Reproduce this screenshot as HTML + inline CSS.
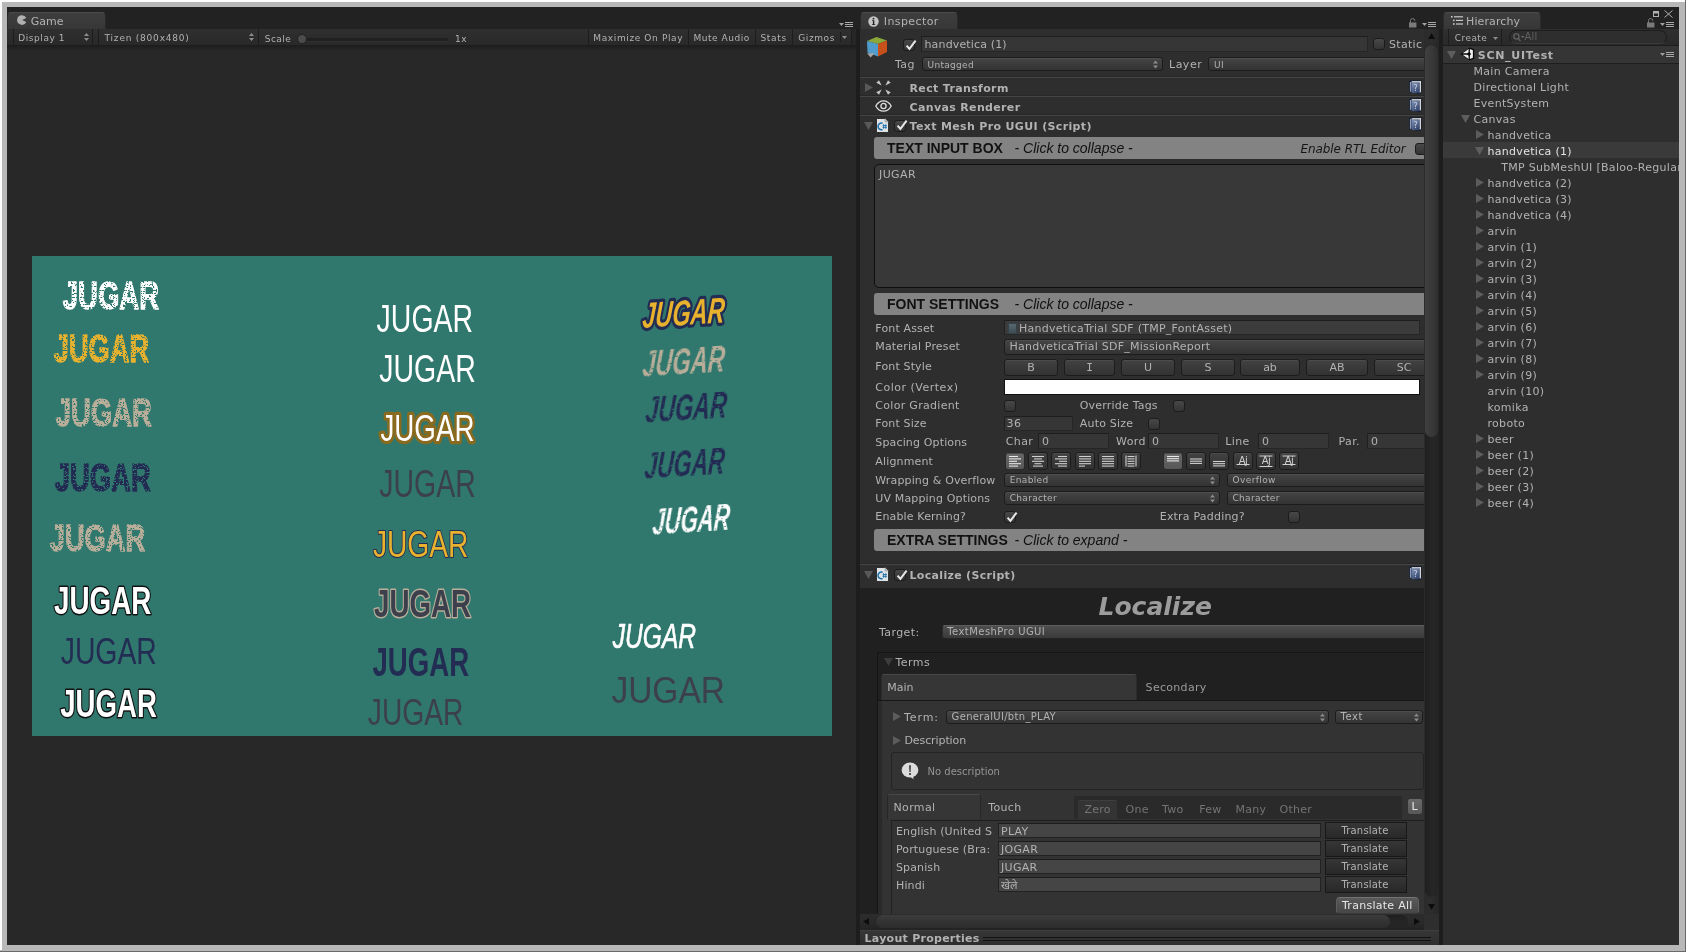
<!DOCTYPE html>
<html lang="en"><head><meta charset="utf-8"><title>Unity Editor</title>
<style>
*{box-sizing:border-box;margin:0;padding:0}
html,body{width:1686px;height:952px;overflow:hidden}
body{background:#b8b8b8;font-family:"DejaVu Sans","Liberation Sans",sans-serif;font-size:11px;color:#b2b2b2;position:relative;line-height:1}
.abs,.abs *{position:absolute}
#frame-w-t{left:0;top:0;width:1686px;height:2px;background:#fdfdfd}
#frame-w-l{left:0;top:0;width:2px;height:950px;background:#fdfdfd}
#frame-d-r{left:1685px;top:0;width:1px;height:952px;background:#6a6a6a}
#frame-d-b{left:0;top:951px;width:1686px;height:1px;background:#6a6a6a}
#main{left:7px;top:7px;width:1672px;height:938px;background:#222;overflow:hidden;will-change:transform}
.t{white-space:pre;line-height:13px;height:13px}
.b{font-weight:bold}
.tab{background:linear-gradient(#3e3e3e,#373737);border-top:1px solid #4a4a4a;border-left:1px solid #2a2a2a;border-right:1px solid #2a2a2a;border-radius:4px 4px 0 0}
.tbar{background:linear-gradient(#2f2f2f,#292929);}
.div{width:1px;background:#1d1d1d}
.popup{background:linear-gradient(#454545,#333);border:1px solid #1c1c1c;border-radius:3px;box-shadow:inset 0 1px 0 #4e4e4e}
.field{background:#363636;border:1px solid #262626;border-top-color:#1e1e1e;border-left-color:#202020}
.cb{background:linear-gradient(#484848,#343434);border:1px solid #1c1c1c;border-radius:3px}
.btn{background:linear-gradient(#424242,#323232);border:1px solid #1c1c1c;border-radius:3px;box-shadow:inset 0 1px 0 #4c4c4c}
.btn.on{background:linear-gradient(#686868,#585858);border-color:#2a2a2a}
.sep{height:2px;border-top:1px solid #242424;background:#444}
</style></head>
<body class="abs">
<div id="frame-w-t"></div><div id="frame-w-l"></div><div id="frame-d-r"></div><div id="frame-d-b"></div>
<div id="main">
<!-- Game panel -->
<div class="" style="left:0px;top:38px;width:849px;height:900px;background:#282828"></div>
<div class="" style="left:0px;top:38px;width:849px;height:6px;background:linear-gradient(#1c1c1c,#282828)"></div>
<div class="tab" style="left:0px;top:5px;width:98.5px;height:17px;"></div>
<svg style="left:10px;top:8px" width="10" height="10" viewBox="0 0 10 10"><path d="M5 0.2A4.8 4.8 0 1 0 9.3 7L5.2 5L9.3 3A4.8 4.8 0 0 0 5 0.2Z" fill="#b0b0b0"/></svg>
<span class="t" style="left:23.7px;top:8px;letter-spacing:0.05px;">Game</span>
<svg style="left:832px;top:15px" width="15" height="6" viewBox="0 0 15 6"><path d="M0 1h5L2.5 4Z" fill="#a0a0a0"/><path d="M6 0.5h8M6 2.5h8M6 4.5h8" stroke="#a8a8a8" stroke-width="1"/></svg>
<div class="tbar" style="left:0px;top:22px;width:849px;height:16px;"></div>
<div class="" style="left:844px;top:22px;width:5px;height:16px;background:#262626"></div>
<div class="div" style="left:6px;top:22px;width:1px;height:16px;"></div>
<div class="div" style="left:85px;top:22px;width:1px;height:16px;"></div>
<div class="div" style="left:91px;top:22px;width:1px;height:16px;"></div>
<div class="div" style="left:251px;top:22px;width:1px;height:16px;"></div>
<div class="div" style="left:581px;top:22px;width:1px;height:16px;"></div>
<div class="div" style="left:681px;top:22px;width:1px;height:16px;"></div>
<div class="div" style="left:748px;top:22px;width:1px;height:16px;"></div>
<div class="div" style="left:785px;top:22px;width:1px;height:16px;"></div>
<div class="div" style="left:844px;top:22px;width:1px;height:16px;"></div>
<span class="t" style="left:11.3px;top:25px;letter-spacing:0.55px;font-size:9px;">Display 1</span>
<svg style="left:77px;top:26px" width="5" height="8" viewBox="0 0 5 8"><path d="M0 3L2.5 0L5 3ZM0 5L2.5 8L5 5Z" fill="#8c8c8c"/></svg>
<span class="t" style="left:97.6px;top:25px;letter-spacing:0.78px;font-size:9px;">Tizen (800x480)</span>
<svg style="left:242px;top:26px" width="5" height="8" viewBox="0 0 5 8"><path d="M0 3L2.5 0L5 3ZM0 5L2.5 8L5 5Z" fill="#8c8c8c"/></svg>
<span class="t" style="left:257.8px;top:26px;letter-spacing:0.45px;font-size:9px;">Scale</span>
<div class="" style="left:293px;top:30.5px;width:148px;height:4.5px;background:#202020;border-radius:2.5px;border-bottom:1px solid #303030"></div>
<div class="" style="left:290px;top:27px;width:10px;height:10px;background:#4c4c4c;border-radius:5px;border:1px solid #222"></div>
<span class="t" style="left:448px;top:26px;letter-spacing:0.5px;font-size:9px;">1x</span>
<span class="t" style="left:586.3px;top:25px;letter-spacing:0.62px;font-size:9px;">Maximize On Play</span>
<span class="t" style="left:686.5px;top:25px;letter-spacing:0.52px;font-size:9px;">Mute Audio</span>
<span class="t" style="left:753.4px;top:25px;letter-spacing:0.7px;font-size:9px;">Stats</span>
<span class="t" style="left:791.3px;top:25px;letter-spacing:0.58px;font-size:9px;">Gizmos</span>
<div class="" style="left:833px;top:25px;width:1px;height:10px;background:#1d1d1d"></div>
<svg style="left:835px;top:29px" width="5" height="3" viewBox="0 0 5 3"><path d="M0 0h5L2.5 3Z" fill="#8c8c8c"/></svg>
<div class="" style="left:25px;top:249px;width:800px;height:480px;background:#30786d;overflow:hidden"><svg width="800" height="480" viewBox="0 0 800 480" style="left:0;top:0" font-family="Liberation Sans, sans-serif">
<defs><filter id="gr" x="-5%" y="-5%" width="110%" height="110%"><feTurbulence type="fractalNoise" baseFrequency="0.35 0.7" numOctaves="3" seed="7" result="n"/><feColorMatrix in="n" type="matrix" values="0 0 0 0 0  0 0 0 0 0  0 0 0 0 0  0 0 0 14 -8.3" result="m"/><feComposite in="SourceGraphic" in2="m" operator="out"/></filter><filter id="gr2" x="-5%" y="-5%" width="110%" height="110%"><feTurbulence type="fractalNoise" baseFrequency="0.2 0.8" numOctaves="2" seed="11" result="n"/><feColorMatrix in="n" type="matrix" values="0 0 0 0 0  0 0 0 0 0  0 0 0 0 0  0 0 0 14 -9.2" result="m"/><feComposite in="SourceGraphic" in2="m" operator="out"/></filter></defs>
<text transform="translate(30.8,52.8) scale(0.705,1)" font-size="39.0" fill="#ffffff" font-weight="bold" filter="url(#gr)" stroke="#ffffff" stroke-width="1.3" stroke-linejoin="round">JUGAR</text>
<text transform="translate(21.8,105.5) scale(0.715,1)" font-size="38.1" fill="#e9b22e" font-weight="bold" filter="url(#gr)" stroke="#e9b22e" stroke-width="1.3" stroke-linejoin="round">JUGAR</text>
<text transform="translate(23.7,169.7) scale(0.705,1)" font-size="39.0" fill="#b9ae9a" font-weight="bold" filter="url(#gr)" stroke="#b9ae9a" stroke-width="1.3" stroke-linejoin="round">JUGAR</text>
<text transform="translate(22.7,234.7) scale(0.720,1)" font-size="38.1" fill="#232c52" font-weight="bold" filter="url(#gr)" stroke="#232c52" stroke-width="1.3" stroke-linejoin="round">JUGAR</text>
<text transform="translate(17.7,295.4) scale(0.724,1)" font-size="37.7" fill="#b9ae9a" font-weight="bold" filter="url(#gr)" stroke="#b9ae9a" stroke-width="1.3" stroke-linejoin="round">JUGAR</text>
<text transform="translate(22.0,358.2) scale(0.715,1)" font-size="38.9" fill="#ffffff" font-weight="bold" stroke="#111" stroke-width="3" stroke-linejoin="round" paint-order="stroke">JUGAR</text>
<text transform="translate(28.7,408.0) scale(0.773,1)" font-size="36.7" fill="#232c52" font-weight="normal">JUGAR</text>
<text transform="translate(28.2,461.4) scale(0.710,1)" font-size="38.9" fill="#ffffff" font-weight="bold" stroke="#111" stroke-width="3" stroke-linejoin="round" paint-order="stroke">JUGAR</text>
<text transform="translate(344.6,76.3) scale(0.744,1)" font-size="38.3" fill="#ffffff" font-weight="normal">JUGAR</text>
<text transform="translate(347.3,126.0) scale(0.752,1)" font-size="37.9" fill="#ffffff" font-weight="normal">JUGAR</text>
<text transform="translate(348.4,184.5) scale(0.763,1)" font-size="36.4" fill="#ffffff" font-weight="normal" stroke="#8a6a1e" stroke-width="6.5" stroke-linejoin="round" paint-order="stroke">JUGAR</text>
<text transform="translate(347.3,241.2) scale(0.752,1)" font-size="37.9" fill="#3c404c" font-weight="normal">JUGAR</text>
<text transform="translate(340.9,301.3) scale(0.762,1)" font-size="37.0" fill="#e9b22e" font-weight="normal" stroke="#232c52" stroke-width="2" stroke-linejoin="round" paint-order="stroke">JUGAR</text>
<text transform="translate(342.0,361.4) scale(0.704,1)" font-size="39.4" fill="#3c404c" font-weight="bold" stroke="#b9ae9a" stroke-width="3" stroke-linejoin="round" paint-order="stroke">JUGAR</text>
<text transform="translate(340.5,419.7) scale(0.693,1)" font-size="39.9" fill="#232c52" font-weight="bold">JUGAR</text>
<text transform="translate(335.8,468.8) scale(0.763,1)" font-size="37.0" fill="#3c404c" font-weight="normal">JUGAR</text>
<text transform="translate(609.8,72.0) rotate(-4) skewX(-8) scale(0.660,1)" font-size="35.7" fill="#e9b22e" font-weight="bold" font-style="italic" stroke="#232c52" stroke-width="6.5" stroke-linejoin="round" paint-order="stroke">JUGAR</text>
<text transform="translate(609.8,121.0) rotate(-4) skewX(-8) scale(0.660,1)" font-size="35.7" fill="#b9ae9a" font-weight="bold" font-style="italic" filter="url(#gr2)">JUGAR</text>
<text transform="translate(612.8,167.0) rotate(-4) skewX(-8) scale(0.652,1)" font-size="35.7" fill="#232c52" font-weight="bold" font-style="italic" filter="url(#gr2)">JUGAR</text>
<text transform="translate(611.8,223.0) rotate(-4) skewX(-8) scale(0.644,1)" font-size="35.7" fill="#232c52" font-weight="bold" font-style="italic" filter="url(#gr2)">JUGAR</text>
<text transform="translate(619.8,279.0) rotate(-4) skewX(-8) scale(0.620,1)" font-size="35.7" fill="#ffffff" font-weight="bold" font-style="italic" filter="url(#gr2)">JUGAR</text>
<text transform="translate(580.8,392.4) scale(0.685,1)" font-size="35.9" fill="#ffffff" font-weight="normal" font-style="italic" stroke="#ffffff" stroke-width="0.7" stroke-linejoin="round">JUGAR</text>
<text transform="translate(579.4,446.5) scale(0.921,1)" font-size="36.4" fill="#3c404c" font-weight="normal">JUGAR</text>
</svg></div>
<!-- Inspector panel -->
<div style="left:849px;top:22px;width:4px;height:916px;background:#1d1d1d"></div>
<div style="left:853px;top:22px;width:580px;height:916px;background:#2e2e2e"></div>
<div class="tab" style="left:853px;top:5px;width:98px;height:17px;"></div>
<svg style="left:861px;top:8.5px" width="11" height="11" viewBox="0 0 11 11"><circle cx="5.5" cy="5.5" r="5.2" fill="#c4c4c4"/><path d="M4 4.2H6.3V8.2H7.3V9H3.9V8.2H4.9V5H4Z" fill="#222"/><circle cx="5.5" cy="2.7" r="0.9" fill="#222"/></svg>
<span class="t" style="left:876.8px;top:8px;font-size:11px;letter-spacing:0.4px;">Inspector</span>
<svg style="left:1402px;top:11px" width="8" height="10" viewBox="0 0 8 10"><path d="M1.5 5V2.6A2.1 2.1 0 0 1 5.7 2.6V3.2" fill="none" stroke="#7a7a7a" stroke-width="1"/><rect x="0" y="4.5" width="7.4" height="5" fill="#7a7a7a"/></svg>
<svg style="left:1415px;top:15px" width="15" height="6" viewBox="0 0 15 6"><path d="M0 1h5L2.5 4Z" fill="#a0a0a0"/><path d="M6 0.5h8M6 2.5h8M6 4.5h8" stroke="#a8a8a8" stroke-width="1"/></svg>
<svg style="left:859px;top:29px" width="22" height="22" viewBox="0 0 22 22"><path d="M1 5L10.5 1L21 4.5L12 8Z" fill="#8aa83a"/><path d="M1 5L12 8V20.5L1.5 16.5Z" fill="#4f9ccc"/><path d="M12 8L21 4.5V16L12 20.5Z" fill="#c8501a"/><path d="M1 17.2H8.5L4.7 21.5Z" fill="#a6a6a6"/></svg>
<div class="cb" style="left:896px;top:32px;width:12px;height:12px;"></div>
<svg style="left:896.5px;top:31.5px" width="13" height="13" viewBox="0 0 13 13"><path d="M2.6 6.6L5.4 9.8L11.6 1.6" fill="none" stroke="#e8e8e8" stroke-width="2" /></svg>
<div class="field" style="left:914px;top:29px;width:447px;height:16px;"></div>
<span class="t" style="left:917.5px;top:31px;font-size:11px;letter-spacing:0.15px;">handvetica (1)</span>
<div class="cb" style="left:1366px;top:31px;width:12px;height:12px;"></div>
<span class="t" style="left:1382px;top:31px;font-size:11px;letter-spacing:0.3px;">Static</span>
<span class="t" style="left:888px;top:51px;font-size:11px;letter-spacing:0.4px;">Tag</span>
<div class="popup" style="left:915px;top:50px;width:241px;height:14px;"></div>
<span class="t" style="left:920.5px;top:52px;font-size:9px;letter-spacing:0.3px;">Untagged</span>
<svg style="left:1146px;top:53px" width="5" height="9" viewBox="0 0 5 9"><path d="M0 3.5L2.5 0.5L5 3.5ZM0 5.5L2.5 8.5L5 5.5Z" fill="#8c8c8c"/></svg>
<span class="t" style="left:1162px;top:51px;font-size:11px;letter-spacing:0.5px;">Layer</span>
<div class="popup" style="left:1201px;top:50px;width:230px;height:14px;"></div>
<span class="t" style="left:1207px;top:52px;font-size:9px;letter-spacing:0.5px;">UI</span>
<div style="left:853px;top:69px;width:564px;height:1px;background:#282828"></div>
<div style="left:853px;top:70px;width:564px;height:1px;background:#454545"></div>
<svg style="left:858px;top:76px" width="8" height="9" viewBox="0 0 8 9"><path d="M0 0L8 4.5L0 9Z" fill="#585858"/></svg>
<svg style="left:869px;top:73px" width="15" height="15" viewBox="0 0 15 15"><g fill="#c6c6c6"><path d="M0.3 2.8L3 0.3L5.6 5.6Z"/><path d="M14.7 2.8L12 0.3L9.4 5.6Z"/><path d="M0.3 12.2L3 14.7L5.6 9.4Z"/><path d="M14.7 12.2L12 14.7L9.4 9.4Z"/></g></svg>
<span class="t b" style="left:902.5px;top:75px;font-size:11px;letter-spacing:0.35px;">Rect Transform</span>
<svg style="left:1402px;top:73px" width="13" height="14" viewBox="0 0 13 14"><defs><linearGradient id="hg1" x1="0" y1="0" x2="0.6" y2="1"><stop offset="0" stop-color="#8798bc"/><stop offset="1" stop-color="#34476e"/></linearGradient></defs><path d="M1.2 0.6L12.4 0.3V12.8L10.6 14L0.3 12V1.6Z" fill="#0e1830"/><rect x="0.9" y="1.9" width="1.5" height="9.9" fill="#8d9dbd"/><rect x="2.7" y="2.4" width="8" height="10.7" fill="url(#hg1)"/><rect x="10.7" y="1.4" width="1.3" height="11" fill="#d4d4d4"/><rect x="2.7" y="1.2" width="9.3" height="1.2" fill="#ececec"/><text x="4.4" y="11" font-size="8" fill="#cfd6e4" font-family="DejaVu Sans, sans-serif">?</text></svg>
<div style="left:853px;top:88px;width:564px;height:1px;background:#282828"></div>
<div style="left:853px;top:89px;width:564px;height:1px;background:#454545"></div>
<svg style="left:868px;top:93px" width="17" height="12" viewBox="0 0 17 12"><path d="M0.8 6C3 2 6 0.8 8.5 0.8S14 2 16.2 6C14 10 11 11.2 8.5 11.2S3 10 0.8 6Z" fill="none" stroke="#e0e0e0" stroke-width="1.3"/><circle cx="8.5" cy="6" r="2.6" fill="none" stroke="#e0e0e0" stroke-width="1.3"/></svg>
<span class="t b" style="left:902.5px;top:94px;font-size:11px;letter-spacing:0.35px;">Canvas Renderer</span>
<svg style="left:1402px;top:91px" width="13" height="14" viewBox="0 0 13 14"><defs><linearGradient id="hg2" x1="0" y1="0" x2="0.6" y2="1"><stop offset="0" stop-color="#8798bc"/><stop offset="1" stop-color="#34476e"/></linearGradient></defs><path d="M1.2 0.6L12.4 0.3V12.8L10.6 14L0.3 12V1.6Z" fill="#0e1830"/><rect x="0.9" y="1.9" width="1.5" height="9.9" fill="#8d9dbd"/><rect x="2.7" y="2.4" width="8" height="10.7" fill="url(#hg2)"/><rect x="10.7" y="1.4" width="1.3" height="11" fill="#d4d4d4"/><rect x="2.7" y="1.2" width="9.3" height="1.2" fill="#ececec"/><text x="4.4" y="11" font-size="8" fill="#cfd6e4" font-family="DejaVu Sans, sans-serif">?</text></svg>
<div style="left:853px;top:107px;width:564px;height:1px;background:#282828"></div>
<div style="left:853px;top:108px;width:564px;height:1px;background:#454545"></div>
<svg style="left:857px;top:115px" width="9" height="8" viewBox="0 0 9 8"><path d="M0 0H9L4.5 8Z" fill="#585858"/></svg>
<svg style="left:869px;top:111px" width="13" height="15" viewBox="0 0 13 15"><path d="M0.5 0.5H9L12.5 4V14.5H0.5Z" fill="#dfe3e6" stroke="#1a1a1a" stroke-width="0.8"/><path d="M9 0.5V4H12.5" fill="#b8bec4" stroke="#888" stroke-width="0.5"/><path d="M6.6 5.2A3.4 3.4 0 1 0 6.6 11.6" fill="none" stroke="#1b6fa8" stroke-width="1.5"/><path d="M7.6 6.2V10.8M9.8 6.2V10.8M6.6 7.6H10.8M6.6 9.4H10.8" stroke="#1b6fa8" stroke-width="0.9"/></svg>
<div class="cb" style="left:887px;top:112.5px;width:12px;height:12px;"></div>
<svg style="left:887.5px;top:112px" width="13" height="13" viewBox="0 0 13 13"><path d="M2.6 6.6L5.4 9.8L11.6 1.6" fill="none" stroke="#e8e8e8" stroke-width="2" /></svg>
<span class="t b" style="left:902.5px;top:113px;font-size:11px;letter-spacing:0.35px;">Text Mesh Pro UGUI (Script)</span>
<svg style="left:1402px;top:110px" width="13" height="14" viewBox="0 0 13 14"><defs><linearGradient id="hg3" x1="0" y1="0" x2="0.6" y2="1"><stop offset="0" stop-color="#8798bc"/><stop offset="1" stop-color="#34476e"/></linearGradient></defs><path d="M1.2 0.6L12.4 0.3V12.8L10.6 14L0.3 12V1.6Z" fill="#0e1830"/><rect x="0.9" y="1.9" width="1.5" height="9.9" fill="#8d9dbd"/><rect x="2.7" y="2.4" width="8" height="10.7" fill="url(#hg3)"/><rect x="10.7" y="1.4" width="1.3" height="11" fill="#d4d4d4"/><rect x="2.7" y="1.2" width="9.3" height="1.2" fill="#ececec"/><text x="4.4" y="11" font-size="8" fill="#cfd6e4" font-family="DejaVu Sans, sans-serif">?</text></svg>
<div style="left:867px;top:130px;width:560px;height:22px;background:#838383;border-radius:3px"></div>
<span class="t" style="left:880px;top:132.5px;font:bold 14px/16px 'Liberation Sans',sans-serif;color:#111;height:16px">TEXT INPUT BOX</span>
<span class="t" style="left:1007.5px;top:132.5px;font:italic 14px/16px 'Liberation Sans',sans-serif;color:#111;height:16px">- Click to collapse -</span>
<span class="t" style="left:1293.5px;top:136px;font-size:12px;letter-spacing:-0.08px;color:#161616;font-style:oblique;">Enable RTL Editor</span>
<div class="cb" style="left:1408px;top:136px;width:12px;height:12px;"></div>
<div style="left:866.5px;top:156.5px;width:560px;height:124.5px;background:#383838;border:1.5px solid #0e0e0e;border-radius:5px"></div>
<span class="t" style="left:872px;top:161px;font-size:11px;letter-spacing:0.4px;">JUGAR</span>
<div style="left:867px;top:286px;width:560px;height:22px;background:#838383;border-radius:3px"></div>
<span class="t" style="left:880px;top:288.5px;font:bold 14px/16px 'Liberation Sans',sans-serif;color:#111;height:16px">FONT SETTINGS</span>
<span class="t" style="left:1007.5px;top:288.5px;font:italic 14px/16px 'Liberation Sans',sans-serif;color:#111;height:16px">- Click to collapse -</span>
<span class="t" style="left:868.3px;top:315px;font-size:11px;letter-spacing:0.15px;">Font Asset</span>
<div class="field" style="left:996.5px;top:313px;width:416.5px;height:15px;background:#3c3c3c"></div>
<div style="left:1000.5px;top:316px;width:9.5px;height:10.5px;background:linear-gradient(#586870,#3e4c54);border:1px solid #36424a"></div>
<span class="t" style="left:1012px;top:315px;font-size:11px;letter-spacing:0.25px;">HandveticaTrial SDF (TMP_FontAsset)</span>
<span class="t" style="left:868.3px;top:333px;font-size:11px;letter-spacing:0.15px;">Material Preset</span>
<div class="popup" style="left:997px;top:332px;width:434px;height:16px;"></div>
<span class="t" style="left:1002.5px;top:333px;font-size:11px;letter-spacing:0.24px;">HandveticaTrial SDF_MissionReport</span>
<span class="t" style="left:868.3px;top:353px;font-size:11px;letter-spacing:0.15px;">Font Style</span>
<div class="btn" style="left:997px;top:352px;width:54px;height:17px;"></div>
<span class="t" style="left:997px;top:354px;width:54px;text-align:center;font-size:11px;">B</span>
<div class="btn" style="left:1057px;top:352px;width:51px;height:17px;"></div>
<span class="t" style="left:1057px;top:354px;width:51px;text-align:center;font-size:11px;font-family:'DejaVu Sans Mono',monospace;">I</span>
<div class="btn" style="left:1114px;top:352px;width:54px;height:17px;"></div>
<span class="t" style="left:1114px;top:354px;width:54px;text-align:center;font-size:11px;">U</span>
<div class="btn" style="left:1174px;top:352px;width:54px;height:17px;"></div>
<span class="t" style="left:1174px;top:354px;width:54px;text-align:center;font-size:11px;">S</span>
<div class="btn" style="left:1233px;top:352px;width:60px;height:17px;"></div>
<span class="t" style="left:1233px;top:354px;width:60px;text-align:center;font-size:11px;">ab</span>
<div class="btn" style="left:1299px;top:352px;width:62px;height:17px;"></div>
<span class="t" style="left:1299px;top:354px;width:62px;text-align:center;font-size:11px;">AB</span>
<div class="btn" style="left:1367px;top:352px;width:60px;height:17px;"></div>
<span class="t" style="left:1367px;top:354px;width:60px;text-align:center;font-size:11px;">SC</span>
<span class="t" style="left:868.3px;top:374px;font-size:11px;letter-spacing:0.5px;">Color (Vertex)</span>
<div style="left:996.5px;top:372px;width:416.5px;height:16px;background:#fff;border:1px solid #111"></div>
<span class="t" style="left:868.3px;top:392px;font-size:11px;letter-spacing:0.3px;">Color Gradient</span>
<div class="cb" style="left:997px;top:393px;width:12px;height:12px;"></div>
<span class="t" style="left:1072.75px;top:392px;font-size:11px;letter-spacing:0.2px;">Override Tags</span>
<div class="cb" style="left:1166px;top:393px;width:12px;height:12px;"></div>
<span class="t" style="left:868.3px;top:410px;font-size:11px;letter-spacing:0.15px;">Font Size</span>
<div class="field" style="left:996.5px;top:408.5px;width:69.5px;height:15px;"></div>
<span class="t" style="left:999.6px;top:410px;font-size:11px;letter-spacing:0.3px;">36</span>
<span class="t" style="left:1072.75px;top:410px;font-size:11px;letter-spacing:0.2px;">Auto Size</span>
<div class="cb" style="left:1141px;top:411px;width:12px;height:12px;"></div>
<span class="t" style="left:868.3px;top:429px;font-size:11px;letter-spacing:0.15px;">Spacing Options</span>
<span class="t" style="left:998.75px;top:428px;font-size:11px;letter-spacing:0.4px;">Char</span>
<div class="field" style="left:1031px;top:426px;width:70.5px;height:15.5px;"></div>
<span class="t" style="left:1035px;top:428px;font-size:11px;letter-spacing:0.15px;">0</span>
<span class="t" style="left:1109px;top:428px;font-size:11px;letter-spacing:0.4px;">Word</span>
<div class="field" style="left:1141px;top:426px;width:70.5px;height:15.5px;"></div>
<span class="t" style="left:1145px;top:428px;font-size:11px;letter-spacing:0.15px;">0</span>
<span class="t" style="left:1218.25px;top:428px;font-size:11px;letter-spacing:0.4px;">Line</span>
<div class="field" style="left:1251px;top:426px;width:70.5px;height:15.5px;"></div>
<span class="t" style="left:1255px;top:428px;font-size:11px;letter-spacing:0.15px;">0</span>
<span class="t" style="left:1331.5px;top:428px;font-size:11px;letter-spacing:0.4px;">Par.</span>
<div class="field" style="left:1360px;top:426px;width:70.5px;height:15.5px;"></div>
<span class="t" style="left:1364px;top:428px;font-size:11px;letter-spacing:0.15px;">0</span>
<span class="t" style="left:868.3px;top:448px;font-size:11px;letter-spacing:0.15px;">Alignment</span>
<div class="btn on" style="left:998px;top:445px;width:20px;height:18px;"></div>
<svg style="left:1001px;top:448px" width="14" height="12" viewBox="0 0 14 12"><path d="M1 1.5h9" stroke="#e8e8e8" stroke-width="1.1"/><path d="M1 3.9h12" stroke="#e8e8e8" stroke-width="1.1"/><path d="M1 6.3h8" stroke="#e8e8e8" stroke-width="1.1"/><path d="M1 8.7h12" stroke="#e8e8e8" stroke-width="1.1"/><path d="M1 11.1h9" stroke="#e8e8e8" stroke-width="1.1"/></svg>
<div class="btn" style="left:1021px;top:445px;width:20px;height:18px;"></div>
<svg style="left:1024px;top:448px" width="14" height="12" viewBox="0 0 14 12"><path d="M1.0 1.5h12" stroke="#d0d0d0" stroke-width="1.1"/><path d="M3.0 3.9h8" stroke="#d0d0d0" stroke-width="1.1"/><path d="M1.0 6.3h12" stroke="#d0d0d0" stroke-width="1.1"/><path d="M3.5 8.7h7" stroke="#d0d0d0" stroke-width="1.1"/><path d="M2.0 11.1h10" stroke="#d0d0d0" stroke-width="1.1"/></svg>
<div class="btn" style="left:1044px;top:445px;width:20px;height:18px;"></div>
<svg style="left:1047px;top:448px" width="14" height="12" viewBox="0 0 14 12"><path d="M4 1.5h9" stroke="#d0d0d0" stroke-width="1.1"/><path d="M1 3.9h12" stroke="#d0d0d0" stroke-width="1.1"/><path d="M5 6.3h8" stroke="#d0d0d0" stroke-width="1.1"/><path d="M1 8.7h12" stroke="#d0d0d0" stroke-width="1.1"/><path d="M4 11.1h9" stroke="#d0d0d0" stroke-width="1.1"/></svg>
<div class="btn" style="left:1068px;top:445px;width:20px;height:18px;"></div>
<svg style="left:1071px;top:448px" width="14" height="12" viewBox="0 0 14 12"><path d="M1 1.5h12" stroke="#d0d0d0" stroke-width="1.1"/><path d="M1 3.9h12" stroke="#d0d0d0" stroke-width="1.1"/><path d="M1 6.3h12" stroke="#d0d0d0" stroke-width="1.1"/><path d="M1 8.7h12" stroke="#d0d0d0" stroke-width="1.1"/><path d="M1 11.1h6" stroke="#d0d0d0" stroke-width="1.1"/></svg>
<div class="btn" style="left:1091px;top:445px;width:20px;height:18px;"></div>
<svg style="left:1094px;top:448px" width="14" height="12" viewBox="0 0 14 12"><path d="M1 1.5h12" stroke="#d0d0d0" stroke-width="1.1"/><path d="M1 3.9h12" stroke="#d0d0d0" stroke-width="1.1"/><path d="M1 6.3h12" stroke="#d0d0d0" stroke-width="1.1"/><path d="M1 8.7h12" stroke="#d0d0d0" stroke-width="1.1"/><path d="M1 11.1h12" stroke="#d0d0d0" stroke-width="1.1"/></svg>
<div class="btn" style="left:1114px;top:445px;width:20px;height:18px;"></div>
<svg style="left:1117px;top:448px" width="14" height="12" viewBox="0 0 14 12"><path d="M2 0.5V11.5M12 0.5V11.5" stroke="#d0d0d0" stroke-width="1.1"/><path d="M3.5 1.5h7" stroke="#d0d0d0" stroke-width="1.1"/><path d="M3.5 3.9h7" stroke="#d0d0d0" stroke-width="1.1"/><path d="M3.5 6.3h7" stroke="#d0d0d0" stroke-width="1.1"/><path d="M3.5 8.7h7" stroke="#d0d0d0" stroke-width="1.1"/><path d="M3.5 11.1h7" stroke="#d0d0d0" stroke-width="1.1"/></svg>
<div class="btn on" style="left:1156px;top:445px;width:20px;height:18px;"></div>
<svg style="left:1159px;top:448px" width="14" height="12" viewBox="0 0 14 12"><path d="M1 1.5h12" stroke="#e8e8e8" stroke-width="1.1"/><path d="M1 3.7h12" stroke="#e8e8e8" stroke-width="1.1"/><path d="M1 5.9h12" stroke="#e8e8e8" stroke-width="1.1"/></svg>
<div class="btn" style="left:1179px;top:445px;width:20px;height:18px;"></div>
<svg style="left:1182px;top:448px" width="14" height="12" viewBox="0 0 14 12"><path d="M1 4.0h12" stroke="#d0d0d0" stroke-width="1.1"/><path d="M1 6.2h12" stroke="#d0d0d0" stroke-width="1.1"/><path d="M1 8.4h12" stroke="#d0d0d0" stroke-width="1.1"/></svg>
<div class="btn" style="left:1202px;top:445px;width:20px;height:18px;"></div>
<svg style="left:1205px;top:448px" width="14" height="12" viewBox="0 0 14 12"><path d="M1 6.5h12" stroke="#d0d0d0" stroke-width="1.1"/><path d="M1 8.7h12" stroke="#d0d0d0" stroke-width="1.1"/><path d="M1 10.9h12" stroke="#d0d0d0" stroke-width="1.1"/></svg>
<div class="btn" style="left:1226px;top:445px;width:20px;height:18px;"></div>
<span class="t" style="left:1226px;top:447px;width:20px;text-align:center;font-size:10px;letter-spacing:-0.5px;color:#d0d0d0">Aj</span>
<svg style="left:1229px;top:447px" width="14" height="14" viewBox="0 0 14 14"><path d="M0.5 10.5h13" stroke="#d0d0d0" stroke-width="1"/></svg>
<div class="btn" style="left:1249px;top:445px;width:20px;height:18px;"></div>
<span class="t" style="left:1249px;top:447px;width:20px;text-align:center;font-size:10px;letter-spacing:-0.5px;color:#d0d0d0">Aj</span>
<svg style="left:1252px;top:447px" width="14" height="14" viewBox="0 0 14 14"><path d="M0.5 2h13M0.5 12.5h13" stroke="#d0d0d0" stroke-width="1"/></svg>
<div class="btn" style="left:1272px;top:445px;width:20px;height:18px;"></div>
<span class="t" style="left:1272px;top:447px;width:20px;text-align:center;font-size:10px;letter-spacing:-0.5px;color:#d0d0d0">Aj</span>
<svg style="left:1275px;top:447px" width="14" height="14" viewBox="0 0 14 14"><path d="M0.5 2h13M0.5 10.5h13" stroke="#d0d0d0" stroke-width="1"/></svg>
<span class="t" style="left:868.3px;top:467px;font-size:11px;letter-spacing:0.15px;">Wrapping &amp; Overflow</span>
<div class="popup" style="left:997px;top:466px;width:216px;height:14px;"></div>
<span class="t" style="left:1002.75px;top:467px;font-size:9px;letter-spacing:0.35px;">Enabled</span>
<svg style="left:1203px;top:469px" width="5" height="9" viewBox="0 0 5 9"><path d="M0 3.5L2.5 0.5L5 3.5ZM0 5.5L2.5 8.5L5 5.5Z" fill="#8c8c8c"/></svg>
<div class="popup" style="left:1220px;top:466px;width:211px;height:14px;"></div>
<span class="t" style="left:1225.5px;top:467px;font-size:9px;letter-spacing:0.4px;">Overflow</span>
<span class="t" style="left:868.3px;top:485px;font-size:11px;letter-spacing:0.15px;">UV Mapping Options</span>
<div class="popup" style="left:997px;top:484px;width:216px;height:14px;"></div>
<span class="t" style="left:1002.75px;top:485px;font-size:9px;letter-spacing:0.3px;">Character</span>
<svg style="left:1203px;top:487px" width="5" height="9" viewBox="0 0 5 9"><path d="M0 3.5L2.5 0.5L5 3.5ZM0 5.5L2.5 8.5L5 5.5Z" fill="#8c8c8c"/></svg>
<div class="popup" style="left:1220px;top:484px;width:211px;height:14px;"></div>
<span class="t" style="left:1225.5px;top:485px;font-size:9px;letter-spacing:0.3px;">Character</span>
<span class="t" style="left:868.3px;top:503px;font-size:11px;letter-spacing:0.15px;">Enable Kerning?</span>
<div class="cb" style="left:997px;top:504px;width:12px;height:12px;"></div>
<svg style="left:997.5px;top:503.5px" width="13" height="13" viewBox="0 0 13 13"><path d="M2.6 6.6L5.4 9.8L11.6 1.6" fill="none" stroke="#e8e8e8" stroke-width="2" /></svg>
<span class="t" style="left:1152.75px;top:503px;font-size:11px;letter-spacing:0.2px;">Extra Padding?</span>
<div class="cb" style="left:1281px;top:504px;width:12px;height:12px;"></div>
<div style="left:867px;top:522px;width:560px;height:22px;background:#838383;border-radius:3px"></div>
<span class="t" style="left:880px;top:524.5px;font:bold 14px/16px 'Liberation Sans',sans-serif;color:#111;height:16px">EXTRA SETTINGS</span>
<span class="t" style="left:1007.5px;top:524.5px;font:italic 14px/16px 'Liberation Sans',sans-serif;color:#111;height:16px">- Click to expand -</span>
<div style="left:853px;top:556px;width:564px;height:1px;background:#282828"></div>
<div style="left:853px;top:557px;width:564px;height:1px;background:#454545"></div>
<svg style="left:857px;top:564px" width="9" height="8" viewBox="0 0 9 8"><path d="M0 0H9L4.5 8Z" fill="#585858"/></svg>
<svg style="left:869px;top:560px" width="13" height="15" viewBox="0 0 13 15"><path d="M0.5 0.5H9L12.5 4V14.5H0.5Z" fill="#dfe3e6" stroke="#1a1a1a" stroke-width="0.8"/><path d="M9 0.5V4H12.5" fill="#b8bec4" stroke="#888" stroke-width="0.5"/><path d="M6.6 5.2A3.4 3.4 0 1 0 6.6 11.6" fill="none" stroke="#1b6fa8" stroke-width="1.5"/><path d="M7.6 6.2V10.8M9.8 6.2V10.8M6.6 7.6H10.8M6.6 9.4H10.8" stroke="#1b6fa8" stroke-width="0.9"/></svg>
<div class="cb" style="left:887px;top:562px;width:12px;height:12px;"></div>
<svg style="left:887.5px;top:561.5px" width="13" height="13" viewBox="0 0 13 13"><path d="M2.6 6.6L5.4 9.8L11.6 1.6" fill="none" stroke="#e8e8e8" stroke-width="2" /></svg>
<span class="t b" style="left:902.5px;top:562px;font-size:11px;letter-spacing:0.32px;">Localize (Script)</span>
<svg style="left:1402px;top:559px" width="13" height="14" viewBox="0 0 13 14"><defs><linearGradient id="hg4" x1="0" y1="0" x2="0.6" y2="1"><stop offset="0" stop-color="#8798bc"/><stop offset="1" stop-color="#34476e"/></linearGradient></defs><path d="M1.2 0.6L12.4 0.3V12.8L10.6 14L0.3 12V1.6Z" fill="#0e1830"/><rect x="0.9" y="1.9" width="1.5" height="9.9" fill="#8d9dbd"/><rect x="2.7" y="2.4" width="8" height="10.7" fill="url(#hg4)"/><rect x="10.7" y="1.4" width="1.3" height="11" fill="#d4d4d4"/><rect x="2.7" y="1.2" width="9.3" height="1.2" fill="#ececec"/><text x="4.4" y="11" font-size="8" fill="#cfd6e4" font-family="DejaVu Sans, sans-serif">?</text></svg>
<div style="left:853px;top:580.5px;width:580px;height:327px;background:#202020"></div>
<span class="t b" style="left:1091.5px;top:593px;font-size:25px;letter-spacing:0px;color:#9c9c9c;font-style:oblique;height:30px;line-height:30px;margin-top:-8.5px;">Localize</span>
<span class="t" style="left:872px;top:619px;font-size:11px;letter-spacing:0.4px;">Target:</span>
<div class="popup" style="left:935px;top:618px;width:496px;height:14px;background:linear-gradient(#4e4e4e,#3a3a3a);border-color:#5e5e5e #2a2a2a #242424 #2a2a2a;box-shadow:none"></div>
<span class="t" style="left:940.25px;top:618px;font-size:10px;letter-spacing:0.44px;">TextMeshPro UGUI</span>
<div style="left:870px;top:645px;width:561px;height:262px;background:#202020;border-top:1px solid #151515;border-left:1px solid #151515"></div>
<svg style="left:876.5px;top:651px" width="9" height="8" viewBox="0 0 9 8"><path d="M0 0H9L4.5 8Z" fill="#3c3c3c"/></svg>
<span class="t" style="left:888.4px;top:649px;font-size:11px;letter-spacing:0.5px;">Terms</span>
<div style="left:874px;top:667px;width:256px;height:26px;background:#363636;border-top:1px solid #484848;border-left:1px solid #2c2c2c;border-right:1px solid #2c2c2c;border-radius:3px 3px 0 0"></div>
<span class="t" style="left:880.25px;top:674px;font-size:11px;letter-spacing:0px;">Main</span>
<span class="t" style="left:1138.6px;top:674px;font-size:11px;letter-spacing:0.3px;color:#9a9a9a;">Secondary</span>
<div style="left:871px;top:692.5px;width:560px;height:1.5px;background:#161616"></div>
<div style="left:871px;top:694px;width:4px;height:213px;background:#2a2a2a"></div>
<div style="left:875px;top:694px;width:556px;height:213px;background:#333"></div>
<svg style="left:886px;top:705.3px" width="8" height="9" viewBox="0 0 8 9"><path d="M0 0L8 4.5L0 9Z" fill="#5c5c5c"/></svg>
<span class="t" style="left:897px;top:704px;font-size:11px;letter-spacing:0.9px;">Term:</span>
<div class="popup" style="left:939px;top:703px;width:383px;height:14px;"></div>
<span class="t" style="left:944.6px;top:703px;font-size:10px;letter-spacing:0.32px;">GeneralUI/btn_PLAY</span>
<svg style="left:1313px;top:706px" width="5" height="9" viewBox="0 0 5 9"><path d="M0 3.5L2.5 0.5L5 3.5ZM0 5.5L2.5 8.5L5 5.5Z" fill="#8c8c8c"/></svg>
<div class="popup" style="left:1328px;top:703px;width:88px;height:14px;"></div>
<span class="t" style="left:1333.5px;top:703px;font-size:10px;letter-spacing:0.6px;">Text</span>
<svg style="left:1406.5px;top:706px" width="5" height="9" viewBox="0 0 5 9"><path d="M0 3.5L2.5 0.5L5 3.5ZM0 5.5L2.5 8.5L5 5.5Z" fill="#8c8c8c"/></svg>
<svg style="left:886px;top:728.5px" width="8" height="9" viewBox="0 0 8 9"><path d="M0 0L8 4.5L0 9Z" fill="#5c5c5c"/></svg>
<span class="t" style="left:897.5px;top:727px;font-size:11px;letter-spacing:-0.1px;">Description</span>
<div style="left:883.5px;top:745px;width:533px;height:37.5px;border:1px solid #232323;border-radius:3px;background:#333"></div>
<svg style="left:893.5px;top:755px" width="18" height="18" viewBox="0 0 18 18"><ellipse cx="9" cy="8" rx="8.4" ry="7.6" fill="#dcdcdc"/><path d="M9 14.5L12.6 17.2L12 13.5Z" fill="#dcdcdc"/><path d="M8.2 3.2H9.8L9.5 10H8.5Z" fill="#222"/><circle cx="9" cy="12" r="1" fill="#222"/></svg>
<span class="t" style="left:920.5px;top:758px;font-size:10px;letter-spacing:0px;color:#959595;">No description</span>
<div style="left:880px;top:787px;width:94px;height:25px;background:#363636;border-top:1px solid #484848;border-left:1px solid #262626;border-right:1px solid #262626;border-radius:3px 3px 0 0"></div>
<span class="t" style="left:886.5px;top:794px;font-size:11px;letter-spacing:0.35px;">Normal</span>
<span class="t" style="left:981.25px;top:794px;font-size:11px;letter-spacing:0.35px;">Touch</span>
<div style="left:1067px;top:789px;width:328px;height:23px;background:#2a2a2a"></div>
<div style="left:1070.5px;top:792.5px;width:39px;height:19.5px;background:#343434;border-top:1px solid #3e3e3e;border-radius:2px 2px 0 0"></div>
<span class="t" style="left:1077.4px;top:796px;font-size:11px;letter-spacing:0.25px;color:#747474;">Zero</span>
<span class="t" style="left:1118.6px;top:796px;font-size:11px;letter-spacing:0.25px;color:#747474;">One</span>
<span class="t" style="left:1155px;top:796px;font-size:11px;letter-spacing:0.25px;color:#747474;">Two</span>
<span class="t" style="left:1192.2px;top:796px;font-size:11px;letter-spacing:0.25px;color:#747474;">Few</span>
<span class="t" style="left:1228.5px;top:796px;font-size:11px;letter-spacing:0.25px;color:#747474;">Many</span>
<span class="t" style="left:1272.6px;top:796px;font-size:11px;letter-spacing:0.25px;color:#747474;">Other</span>
<div style="left:1400px;top:791px;width:16px;height:17px;background:linear-gradient(#6a6a6a,#585858);border:1px solid #333;border-radius:3px"></div>
<span class="t" style="left:1404.5px;top:793px;font-size:11px;letter-spacing:0px;color:#e6e6e6;">L</span>
<div style="left:883.5px;top:813px;width:548px;height:94px;background:#333;border-top:1.5px solid #1e1e1e;border-left:1px solid #222"></div>
<div style="left:889px;top:818px;width:99px;height:15px;overflow:hidden"><span class="t" style="left:0;top:0;font-size:11px;letter-spacing:0.12px">English (United S</span></div>
<div class="field" style="left:991px;top:816px;width:323px;height:15px;background:#454545;border-color:#222;border-top-color:#1c1c1c"></div>
<span class="t" style="left:994px;top:818px;font-size:11px;letter-spacing:0.3px;">PLAY</span>
<div style="left:1318px;top:814.5px;width:82px;height:17px;background:linear-gradient(#363636,#282828);border:1px solid #181818"></div>
<span class="t" style="left:1334.4px;top:817px;font-size:10px;letter-spacing:0.2px;">Translate</span>
<div style="left:889px;top:836px;width:99px;height:15px;overflow:hidden"><span class="t" style="left:0;top:0;font-size:11px;letter-spacing:0.12px">Portuguese (Bra:</span></div>
<div class="field" style="left:991px;top:834px;width:323px;height:15px;background:#454545;border-color:#222;border-top-color:#1c1c1c"></div>
<span class="t" style="left:994px;top:836px;font-size:11px;letter-spacing:0.3px;">JOGAR</span>
<div style="left:1318px;top:832.5px;width:82px;height:17px;background:linear-gradient(#363636,#282828);border:1px solid #181818"></div>
<span class="t" style="left:1334.4px;top:835px;font-size:10px;letter-spacing:0.2px;">Translate</span>
<div style="left:889px;top:854px;width:99px;height:15px;overflow:hidden"><span class="t" style="left:0;top:0;font-size:11px;letter-spacing:0.12px">Spanish</span></div>
<div class="field" style="left:991px;top:852px;width:323px;height:15px;background:#454545;border-color:#222;border-top-color:#1c1c1c"></div>
<span class="t" style="left:994px;top:854px;font-size:11px;letter-spacing:0.3px;">JUGAR</span>
<div style="left:1318px;top:850.5px;width:82px;height:17px;background:linear-gradient(#363636,#282828);border:1px solid #181818"></div>
<span class="t" style="left:1334.4px;top:853px;font-size:10px;letter-spacing:0.2px;">Translate</span>
<div style="left:889px;top:872px;width:99px;height:15px;overflow:hidden"><span class="t" style="left:0;top:0;font-size:11px;letter-spacing:0.12px">Hindi</span></div>
<div class="field" style="left:991px;top:870px;width:323px;height:15px;background:#454545;border-color:#222;border-top-color:#1c1c1c"></div>
<span class="t" style="left:994px;top:872px;font-size:11px;letter-spacing:0.3px;">खेले</span>
<div style="left:1318px;top:868.5px;width:82px;height:17px;background:linear-gradient(#363636,#282828);border:1px solid #181818"></div>
<span class="t" style="left:1334.4px;top:871px;font-size:10px;letter-spacing:0.2px;">Translate</span>
<div style="left:1329px;top:890px;width:83px;height:17px;background:linear-gradient(#5a5a5a,#464646);border:1px solid #5e5e5e;border-top-color:#747474;border-bottom-color:#3a3a3a;border-radius:4px"></div>
<span class="t" style="left:1335px;top:892px;font-size:11px;letter-spacing:0.27px;color:#e6e6e6;">Translate All</span>
<div style="left:1417px;top:22px;width:15px;height:885px;background:linear-gradient(90deg,#2b2b2b,#2d2d2d 50%,#262626)"></div>
<div style="left:1418px;top:37px;width:13.5px;height:853px;background:linear-gradient(90deg,#1f1f1f,#262626 50%,#242424);border-radius:7px"></div>
<div style="left:1418px;top:38px;width:13px;height:391.5px;background:linear-gradient(90deg,#404040,#373737 60%,#2f2f2f);border-radius:6.5px"></div>
<svg style="left:1421px;top:25.5px" width="7" height="6" viewBox="0 0 7 6"><path d="M0 6H7L3.5 0Z" fill="#0c0c0c"/></svg>
<svg style="left:1421px;top:897px" width="7" height="6" viewBox="0 0 7 6"><path d="M0 0H7L3.5 6Z" fill="#0c0c0c"/></svg>
<div style="left:853px;top:907px;width:564px;height:15.5px;background:linear-gradient(#2c2c2c,#2a2a2a 50%,#232323)"></div>
<div style="left:868px;top:908px;width:533px;height:13.5px;background:linear-gradient(#1f1f1f,#262626 50%,#242424);border-radius:7px"></div>
<div style="left:869px;top:908.3px;width:514px;height:12.7px;background:linear-gradient(#3c3c3c,#333 50%,#2c2c2c);border-radius:6.5px"></div>
<svg style="left:856px;top:911px" width="6" height="7" viewBox="0 0 6 7"><path d="M6 0V7L0 3.5Z" fill="#0c0c0c"/></svg>
<svg style="left:1407px;top:911px" width="6" height="7" viewBox="0 0 6 7"><path d="M0 0V7L6 3.5Z" fill="#0c0c0c"/></svg>
<div style="left:1417px;top:907px;width:15px;height:15.5px;background:#2e2e2e"></div>
<div style="left:853px;top:922.5px;width:580px;height:15.5px;background:linear-gradient(#363636,#2e2e2e);border-top:1px solid #3e3e3e"></div>
<span class="t b" style="left:857.5px;top:925px;font-size:11px;letter-spacing:0.27px;">Layout Properties</span>
<div style="left:976px;top:929.5px;width:448px;height:1px;background:#111"></div>
<div style="left:976px;top:933px;width:448px;height:1px;background:#111"></div>
<div style="left:1432px;top:22px;width:4px;height:916px;background:#1d1d1d"></div>

<!-- Hierarchy panel -->
<div style="left:1436px;top:22px;width:236px;height:916px;background:#2e2e2e"></div>
<div class="tab" style="left:1436px;top:5px;width:98px;height:17px;"></div>
<svg style="left:1443.5px;top:9px" width="12" height="9" viewBox="0 0 12 9"><g fill="#c8c8c8"><rect x="0" y="0" width="1.6" height="1.6"/><rect x="3" y="0.2" width="9" height="1.2"/><rect x="2" y="3.6" width="1.6" height="1.6"/><rect x="5" y="3.8" width="7" height="1.2"/><rect x="2" y="7.2" width="1.6" height="1.6"/><rect x="5" y="7.4" width="7" height="1.2"/></g></svg>
<span class="t" style="left:1459px;top:8px;font-size:11px;letter-spacing:0.12px;">Hierarchy</span>
<svg style="left:1645.5px;top:4px" width="6" height="6" viewBox="0 0 6 6"><rect x="0.5" y="0.5" width="5" height="5" fill="none" stroke="#b0b0b0"/><rect x="0.5" y="0.5" width="5" height="2" fill="#b0b0b0"/></svg>
<svg style="left:1657px;top:3px" width="9" height="8" viewBox="0 0 9 8"><path d="M0.5 0.5L8.5 7.5M8.5 0.5L0.5 7.5" stroke="#b0b0b0" stroke-width="1"/></svg>
<svg style="left:1640px;top:11px" width="8" height="10" viewBox="0 0 8 10"><path d="M1.5 5V2.6A2.1 2.1 0 0 1 5.7 2.6V3.2" fill="none" stroke="#7a7a7a" stroke-width="1"/><rect x="0" y="4.5" width="7.4" height="5" fill="#7a7a7a"/></svg>
<svg style="left:1653px;top:15px" width="15" height="6" viewBox="0 0 15 6"><path d="M0 1h5L2.5 4Z" fill="#a0a0a0"/><path d="M6 0.5h8M6 2.5h8M6 4.5h8" stroke="#a8a8a8" stroke-width="1"/></svg>
<div class="tbar" style="left:1436px;top:22px;width:236px;height:16px;"></div>
<div class="div" style="left:1441px;top:22px;width:1px;height:16px;"></div>
<div class="div" style="left:1493.5px;top:22px;width:1px;height:16px;"></div>
<span class="t" style="left:1447.8px;top:25px;font-size:9px;letter-spacing:0.42px;">Create</span>
<svg style="left:1486px;top:30px" width="5" height="3" viewBox="0 0 5 3"><path d="M0 0h5L2.5 3Z" fill="#8c8c8c"/></svg>
<div style="left:1501.5px;top:23px;width:158px;height:13.5px;background:#2e2e2e;border:1px solid #1c1c1c;border-bottom-color:#3a3a3a;border-radius:7px"></div>
<svg style="left:1506px;top:26px" width="12" height="9" viewBox="0 0 12 9"><circle cx="3.4" cy="3.4" r="2.6" fill="none" stroke="#6a6a6a" stroke-width="1.1"/><path d="M5.2 5.4L7.4 8" stroke="#6a6a6a" stroke-width="1.2"/><path d="M8 3h3.5L9.75 5Z" fill="#6a6a6a"/></svg>
<span class="t" style="left:1517.6px;top:23px;font-size:10px;letter-spacing:0.1px;color:#606060;">All</span>
<div style="left:1436px;top:38px;width:236px;height:1px;background:#1c1c1c"></div>
<div style="left:1436px;top:39px;width:236px;height:17px;background:#353535"></div>
<svg style="left:1440px;top:44px" width="9" height="8" viewBox="0 0 9 8"><path d="M0 0H9L4.5 8Z" fill="#5e5e5e"/></svg>
<svg style="left:1453px;top:40px" width="15" height="14" viewBox="0 0 15 14"><path d="M0.4 7L9.8 0.4L14.2 2.2V11.8L9.8 13.6Z" fill="#0a0a0a"/><path d="M2.6 6.3L8.6 2.1L8.6 5.2L7.2 6.3ZM2.6 7.7L8.6 11.9L8.6 8.8L7.2 7.7ZM9.9 2L12.9 3.2V10.8L9.9 12L9.9 8.6L11 7L9.9 5.4Z" fill="#ececec"/></svg>
<span class="t b" style="left:1470.8px;top:42px;font-size:11px;letter-spacing:0.7px;">SCN_UITest</span>
<svg style="left:1653px;top:45px" width="15" height="6" viewBox="0 0 15 6"><path d="M0 1h5L2.5 4Z" fill="#a0a0a0"/><path d="M6 0.5h8M6 2.5h8M6 4.5h8" stroke="#a8a8a8" stroke-width="1"/></svg>
<div style="left:1466.5px;top:55px;width:205.5px;height:16px;overflow:hidden"><span class="t" style="left:0;top:3px;letter-spacing:0.3px;">Main Camera</span></div>
<div style="left:1466.5px;top:71px;width:205.5px;height:16px;overflow:hidden"><span class="t" style="left:0;top:3px;letter-spacing:0.3px;">Directional Light</span></div>
<div style="left:1466.5px;top:87px;width:205.5px;height:16px;overflow:hidden"><span class="t" style="left:0;top:3px;letter-spacing:0.3px;">EventSystem</span></div>
<svg style="left:1453.8px;top:108px" width="9" height="8" viewBox="0 0 9 8"><path d="M0 0H9L4.5 8Z" fill="#5e5e5e"/></svg>
<div style="left:1466.5px;top:103px;width:205.5px;height:16px;overflow:hidden"><span class="t" style="left:0;top:3px;letter-spacing:0.3px;">Canvas</span></div>
<svg style="left:1469px;top:123px" width="8" height="9" viewBox="0 0 8 9"><path d="M0 0L8 4.5L0 9Z" fill="#5c5c5c"/></svg>
<div style="left:1480.5px;top:119px;width:191.5px;height:16px;overflow:hidden"><span class="t" style="left:0;top:3px;letter-spacing:0.3px;">handvetica</span></div>
<div style="left:1436px;top:135px;width:236px;height:16px;background:#3a3a3a"></div>
<svg style="left:1467.8px;top:140px" width="9" height="8" viewBox="0 0 9 8"><path d="M0 0H9L4.5 8Z" fill="#5e5e5e"/></svg>
<div style="left:1480.5px;top:135px;width:191.5px;height:16px;overflow:hidden"><span class="t" style="left:0;top:3px;letter-spacing:0.3px;color:#e2e2e2">handvetica (1)</span></div>
<div style="left:1494.2px;top:151px;width:177.8px;height:16px;overflow:hidden"><span class="t" style="left:0;top:3px;letter-spacing:0.3px;">TMP SubMeshUI [Baloo-Regular</span></div>
<svg style="left:1469px;top:171px" width="8" height="9" viewBox="0 0 8 9"><path d="M0 0L8 4.5L0 9Z" fill="#5c5c5c"/></svg>
<div style="left:1480.5px;top:167px;width:191.5px;height:16px;overflow:hidden"><span class="t" style="left:0;top:3px;letter-spacing:0.3px;">handvetica (2)</span></div>
<svg style="left:1469px;top:187px" width="8" height="9" viewBox="0 0 8 9"><path d="M0 0L8 4.5L0 9Z" fill="#5c5c5c"/></svg>
<div style="left:1480.5px;top:183px;width:191.5px;height:16px;overflow:hidden"><span class="t" style="left:0;top:3px;letter-spacing:0.3px;">handvetica (3)</span></div>
<svg style="left:1469px;top:203px" width="8" height="9" viewBox="0 0 8 9"><path d="M0 0L8 4.5L0 9Z" fill="#5c5c5c"/></svg>
<div style="left:1480.5px;top:199px;width:191.5px;height:16px;overflow:hidden"><span class="t" style="left:0;top:3px;letter-spacing:0.3px;">handvetica (4)</span></div>
<svg style="left:1469px;top:219px" width="8" height="9" viewBox="0 0 8 9"><path d="M0 0L8 4.5L0 9Z" fill="#5c5c5c"/></svg>
<div style="left:1480.5px;top:215px;width:191.5px;height:16px;overflow:hidden"><span class="t" style="left:0;top:3px;letter-spacing:0.3px;">arvin</span></div>
<svg style="left:1469px;top:235px" width="8" height="9" viewBox="0 0 8 9"><path d="M0 0L8 4.5L0 9Z" fill="#5c5c5c"/></svg>
<div style="left:1480.5px;top:231px;width:191.5px;height:16px;overflow:hidden"><span class="t" style="left:0;top:3px;letter-spacing:0.3px;">arvin (1)</span></div>
<svg style="left:1469px;top:251px" width="8" height="9" viewBox="0 0 8 9"><path d="M0 0L8 4.5L0 9Z" fill="#5c5c5c"/></svg>
<div style="left:1480.5px;top:247px;width:191.5px;height:16px;overflow:hidden"><span class="t" style="left:0;top:3px;letter-spacing:0.3px;">arvin (2)</span></div>
<svg style="left:1469px;top:267px" width="8" height="9" viewBox="0 0 8 9"><path d="M0 0L8 4.5L0 9Z" fill="#5c5c5c"/></svg>
<div style="left:1480.5px;top:263px;width:191.5px;height:16px;overflow:hidden"><span class="t" style="left:0;top:3px;letter-spacing:0.3px;">arvin (3)</span></div>
<svg style="left:1469px;top:283px" width="8" height="9" viewBox="0 0 8 9"><path d="M0 0L8 4.5L0 9Z" fill="#5c5c5c"/></svg>
<div style="left:1480.5px;top:279px;width:191.5px;height:16px;overflow:hidden"><span class="t" style="left:0;top:3px;letter-spacing:0.3px;">arvin (4)</span></div>
<svg style="left:1469px;top:299px" width="8" height="9" viewBox="0 0 8 9"><path d="M0 0L8 4.5L0 9Z" fill="#5c5c5c"/></svg>
<div style="left:1480.5px;top:295px;width:191.5px;height:16px;overflow:hidden"><span class="t" style="left:0;top:3px;letter-spacing:0.3px;">arvin (5)</span></div>
<svg style="left:1469px;top:315px" width="8" height="9" viewBox="0 0 8 9"><path d="M0 0L8 4.5L0 9Z" fill="#5c5c5c"/></svg>
<div style="left:1480.5px;top:311px;width:191.5px;height:16px;overflow:hidden"><span class="t" style="left:0;top:3px;letter-spacing:0.3px;">arvin (6)</span></div>
<svg style="left:1469px;top:331px" width="8" height="9" viewBox="0 0 8 9"><path d="M0 0L8 4.5L0 9Z" fill="#5c5c5c"/></svg>
<div style="left:1480.5px;top:327px;width:191.5px;height:16px;overflow:hidden"><span class="t" style="left:0;top:3px;letter-spacing:0.3px;">arvin (7)</span></div>
<svg style="left:1469px;top:347px" width="8" height="9" viewBox="0 0 8 9"><path d="M0 0L8 4.5L0 9Z" fill="#5c5c5c"/></svg>
<div style="left:1480.5px;top:343px;width:191.5px;height:16px;overflow:hidden"><span class="t" style="left:0;top:3px;letter-spacing:0.3px;">arvin (8)</span></div>
<svg style="left:1469px;top:363px" width="8" height="9" viewBox="0 0 8 9"><path d="M0 0L8 4.5L0 9Z" fill="#5c5c5c"/></svg>
<div style="left:1480.5px;top:359px;width:191.5px;height:16px;overflow:hidden"><span class="t" style="left:0;top:3px;letter-spacing:0.3px;">arvin (9)</span></div>
<div style="left:1480.5px;top:375px;width:191.5px;height:16px;overflow:hidden"><span class="t" style="left:0;top:3px;letter-spacing:0.3px;">arvin (10)</span></div>
<div style="left:1480.5px;top:391px;width:191.5px;height:16px;overflow:hidden"><span class="t" style="left:0;top:3px;letter-spacing:0.3px;">komika</span></div>
<div style="left:1480.5px;top:407px;width:191.5px;height:16px;overflow:hidden"><span class="t" style="left:0;top:3px;letter-spacing:0.3px;">roboto</span></div>
<svg style="left:1469px;top:427px" width="8" height="9" viewBox="0 0 8 9"><path d="M0 0L8 4.5L0 9Z" fill="#5c5c5c"/></svg>
<div style="left:1480.5px;top:423px;width:191.5px;height:16px;overflow:hidden"><span class="t" style="left:0;top:3px;letter-spacing:0.3px;">beer</span></div>
<svg style="left:1469px;top:443px" width="8" height="9" viewBox="0 0 8 9"><path d="M0 0L8 4.5L0 9Z" fill="#5c5c5c"/></svg>
<div style="left:1480.5px;top:439px;width:191.5px;height:16px;overflow:hidden"><span class="t" style="left:0;top:3px;letter-spacing:0.3px;">beer (1)</span></div>
<svg style="left:1469px;top:459px" width="8" height="9" viewBox="0 0 8 9"><path d="M0 0L8 4.5L0 9Z" fill="#5c5c5c"/></svg>
<div style="left:1480.5px;top:455px;width:191.5px;height:16px;overflow:hidden"><span class="t" style="left:0;top:3px;letter-spacing:0.3px;">beer (2)</span></div>
<svg style="left:1469px;top:475px" width="8" height="9" viewBox="0 0 8 9"><path d="M0 0L8 4.5L0 9Z" fill="#5c5c5c"/></svg>
<div style="left:1480.5px;top:471px;width:191.5px;height:16px;overflow:hidden"><span class="t" style="left:0;top:3px;letter-spacing:0.3px;">beer (3)</span></div>
<svg style="left:1469px;top:491px" width="8" height="9" viewBox="0 0 8 9"><path d="M0 0L8 4.5L0 9Z" fill="#5c5c5c"/></svg>
<div style="left:1480.5px;top:487px;width:191.5px;height:16px;overflow:hidden"><span class="t" style="left:0;top:3px;letter-spacing:0.3px;">beer (4)</span></div>
<div style="left:1436px;top:56px;width:236px;height:1px;background:#1e1e1e"></div>

</div>
</body></html>
